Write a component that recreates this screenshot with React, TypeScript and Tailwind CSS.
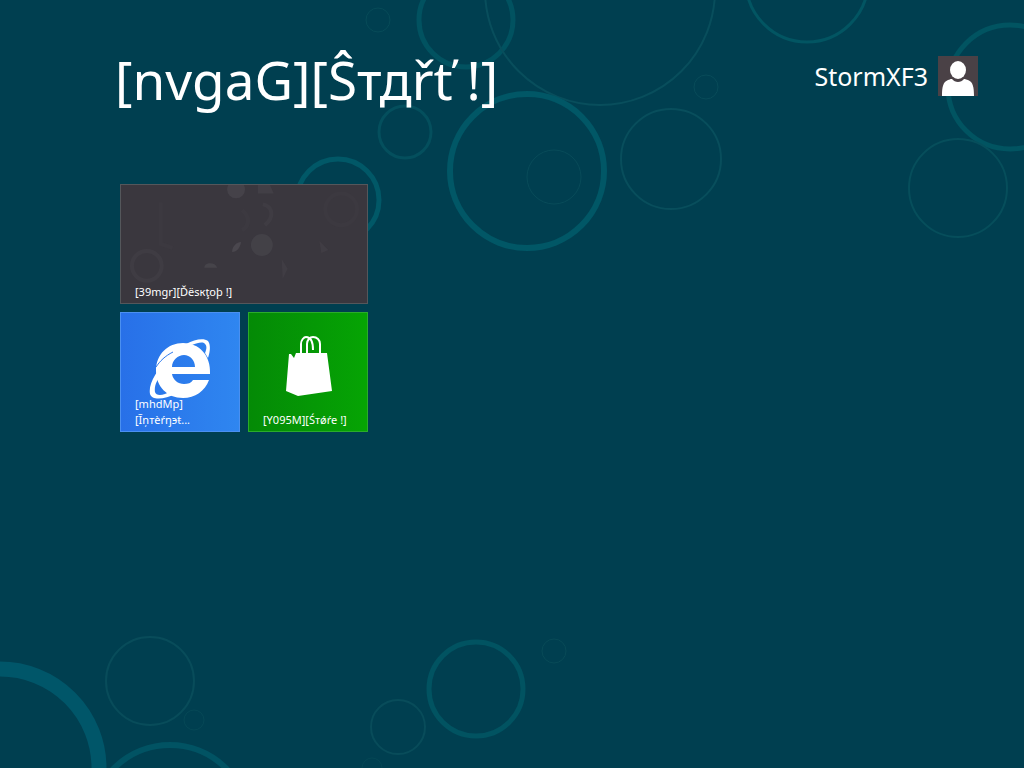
import type { ReactNode } from "react";

type Bubble = { cx: number; cy: number; r: number; w: number; color: string };

const bubbles: Bubble[] = [
  { cx: 378, cy: 20, r: 12, w: 1, color: "#074b58" },
  { cx: 466, cy: 20, r: 47, w: 5, color: "#015260" },
  { cx: 600, cy: -10, r: 115, w: 2, color: "#084e5c" },
  { cx: 405, cy: 132, r: 26, w: 3, color: "#044f5d" },
  { cx: 338, cy: 200, r: 41, w: 5, color: "#015867" },
  { cx: 527, cy: 171, r: 77, w: 6, color: "#015766" },
  { cx: 554, cy: 177, r: 27, w: 1, color: "#084b59" },
  { cx: 671, cy: 159, r: 50, w: 2, color: "#084e5c" },
  { cx: 706, cy: 87, r: 12, w: 1, color: "#084b59" },
  { cx: 807, cy: -19, r: 61, w: 3, color: "#025562" },
  { cx: 1010, cy: 87, r: 62, w: 5, color: "#015461" },
  { cx: 958, cy: 188, r: 49, w: 2, color: "#064e5b" },
  { cx: 0, cy: 768, r: 99, w: 15, color: "#005669" },
  { cx: 150, cy: 681, r: 44, w: 2, color: "#084c5a" },
  { cx: 170, cy: 824, r: 79, w: 6, color: "#015363" },
  { cx: 194, cy: 720, r: 10, w: 1, color: "#064856" },
  { cx: 398, cy: 727, r: 27, w: 2, color: "#084c5a" },
  { cx: 476, cy: 689, r: 47, w: 5, color: "#015361" },
  { cx: 554, cy: 651, r: 12, w: 1, color: "#084a57" },
  { cx: 372, cy: 768, r: 10, w: 1, color: "#054755" },
];

function Background() {
  return (
    <svg
      className="absolute inset-0 h-full w-full"
      viewBox="0 0 1024 768"
      preserveAspectRatio="xMidYMid slice"
      fill="none"
      aria-hidden="true"
    >
      {bubbles.map((b) => (
        <circle key={`${b.cx}-${b.cy}`} cx={b.cx} cy={b.cy} r={b.r} stroke={b.color} strokeWidth={b.w} />
      ))}
    </svg>
  );
}

function UserPicture() {
  return (
    <svg className="size-10 bg-[#4a4146]" viewBox="0 0 40 40" aria-hidden="true">
      <path
        d="M4 40C4 31 5 26 10 24C13 23 13 23 14 23C17 27 23 27 26 23C27 23 27 23 30 24C35 26 36 31 36 40Z"
        fill="#fff"
      />
      <ellipse cx="20" cy="14" rx="8" ry="9" fill="#fff" />
    </svg>
  );
}

function DesktopTexture() {
  return (
    <svg className="h-full w-full" viewBox="0 0 248 120" preserveAspectRatio="xMidYMid slice" aria-hidden="true">
      <g fill="#4a474e">
        <circle cx="116" cy="5" r="9" opacity="0.7" />
        <path d="M138 0H150L154 9H138Z" opacity="0.5" />
        <circle cx="142" cy="61" r="11" opacity="0.6" />
        <path d="M112 68C112 62 117 58 121 58C120 64 117 68 112 68Z" />
        <path d="M84 84C84 78 95 78 97 84Z" opacity="0.8" />
        <path d="M162 75L168 85L163 95Z" opacity="0.4" />
        <path d="M200 57L209 66L202 69Z" opacity="0.4" />
      </g>
      <g fill="none" stroke="#4a474e" strokeWidth="4" opacity="0.35">
        <path d="M143 20C153 22 155 33 145 41" />
        <circle cx="26" cy="82" r="15" />
        <circle cx="222" cy="25" r="16" opacity="0.4" />
        <path d="M40 18V60L52 64" opacity="0.4" />
        <path d="M122 46C130 42 130 32 122 26" opacity="0.5" />
      </g>
    </svg>
  );
}

function ExplorerIcon() {
  return (
    <svg className="h-[62px] w-[62px]" viewBox="0 0 62 62" fill="#fff" aria-hidden="true">
      <path
        fillRule="evenodd"
        d="M61 35H23C24 41 29 45 35 45C39 45 42 44 44 41H60C56 52 46 59 34 59C18 59 7 47 7 32C7 15 19 4 34 4C50 4 62 16 61 35ZM23 28H46C46 21 41 16 35 16C29 16 23 21 23 28Z"
      />
      <path d="M37 5C46 0 55 -1 59 2C62 6 61 13 59 19L56 14C58 9 58 6 55 4C52 3 48 4 43 6Z" />
      <path d="M20 20C8 30 -1 45 1 55C3 62 16 60 27 55L22 52C14 57 7 57 6 53C5 47 8 41 12 36Z" />
      <path d="M7 28C11 22 16 17 24 13" fill="none" stroke="#2b79ee" strokeWidth="1" />
    </svg>
  );
}

function StoreIcon() {
  return (
    <svg className="h-[61px] w-[46px]" viewBox="0 0 46 61" fill="#fff" aria-hidden="true">
      <path d="M3 18H5L8 22L10 17H41L46 55L12 60L0 55Z" />
      <g fill="none" stroke="#fff" strokeWidth="2">
        <path d="M15 17V8C15 4 18 1 20 1C24 1 27 4 27 14" />
        <path d="M21 17V8C21 4 24 1 27 1C31 1 34 4 34 8V17" />
      </g>
    </svg>
  );
}

type TileProps = {
  label: ReactNode;
  className: string;
  children: ReactNode;
};

function Tile({ label, className, children }: TileProps) {
  return (
    <button type="button" className={`relative flex h-[120px] items-center justify-center border ${className}`}>
      {children}
      <span className="absolute bottom-[3px] left-[14px] text-left text-[11px] leading-4">{label}</span>
    </button>
  );
}

export default function App() {
  return (
    <div className="relative min-h-screen overflow-hidden bg-[#003f50] font-['Noto_Sans','Open_Sans',sans-serif] text-white">
      <Background />
      <div className="relative">
        <header className="flex items-start justify-between pt-10 pr-[46px] pl-[115px]">
          <h1 className="text-[53px] leading-[80px] font-normal">[nvgaG][Ŝтдřť !]</h1>
          <button type="button" className="mt-4 flex items-center gap-2.5 text-[25px] leading-10">
            StormXF3
            <UserPicture />
          </button>
        </header>
        <main className="grid w-fit grid-cols-[120px_120px] gap-2 pt-16 pl-[120px]">
          <Tile label="[39mgr][Ďësкţoþ !]" className="col-span-2 border-[#54575b] bg-[#3a373e]">
            <DesktopTexture />
          </Tile>
          <Tile
            label={
              <>
                [mhdMp]
                <br />
                [Ĩņтèŕŋэŧ...
              </>
            }
            className="border-[#4b90f0] bg-linear-to-r from-[#2870e8] to-[#2f86f0] pb-1"
          >
            <ExplorerIcon />
          </Tile>
          <Tile
            label="[Y095M][Śтǿŕe !]"
            className="border-[#2bab2b] bg-linear-to-r from-[#048a06] to-[#06a404] pb-3 pl-0.5"
          >
            <StoreIcon />
          </Tile>
        </main>
      </div>
    </div>
  );
}
